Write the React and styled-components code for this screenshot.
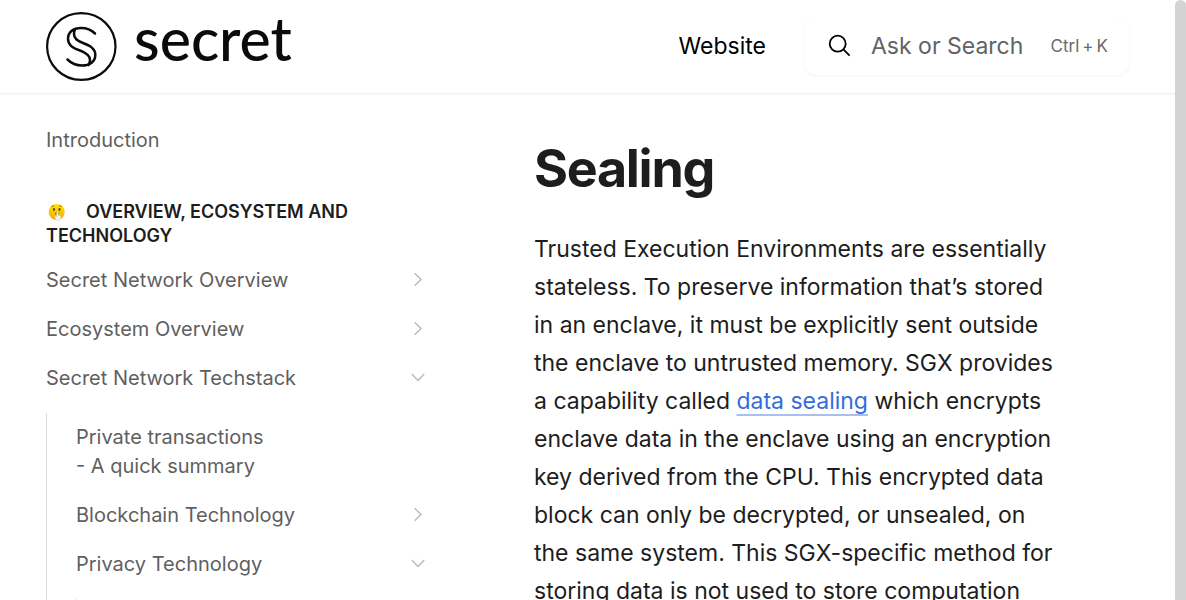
import React from "react";
import styled, { createGlobalStyle } from "styled-components";

const GlobalStyle = createGlobalStyle`
  *, *::before, *::after { box-sizing: border-box; }
  body {
    margin: 0;
    background: #fff;
    color: #1d1d1d;
    font-family: Inter, "Liberation Sans", sans-serif;
  }
  a { color: inherit; text-decoration: none; }
`;

const Window = styled.div`
  display: grid;
  grid-template-columns: minmax(0, 1fr) 11px;
  height: 100vh;
  overflow: hidden;
`;

const ScrollThumb = styled.div`
  background: #d3d3d3;
  border-radius: 6px 6px 0 0;
`;

const Page = styled.div`
  overflow: hidden;
`;

const Header = styled.header`
  display: flex;
  align-items: center;
  height: 94px;
  padding: 0 46px 2px;
  border-bottom: 1px solid #f0f0f0;
  box-shadow: 0 1px 1px #fafafa;
`;

const Brand = styled.a`
  display: flex;
  align-items: center;
  gap: 17px;
  margin-right: auto;
  color: #0b0b0b;
`;

const BrandMark = styled.svg`
  width: 71px;
  height: 72px;
`;

const BrandName = styled.span`
  font: 500 59px/70px Lato, sans-serif;
  padding-bottom: 14px;
`;

const HeaderLink = styled.a`
  margin-right: 38px;
  font-size: 23px;
  line-height: 36px;
  color: #000;
`;

const SearchBox = styled.label`
  display: flex;
  align-items: center;
  width: 325px;
  height: 58px;
  padding: 0 21px 0 24px;
  border-radius: 12px;
  color: #000;
  box-shadow: 0 1px 3px #0000000d, 0 0 1px #00000008;
`;

const SearchInput = styled.input`
  flex: 1;
  min-width: 0;
  margin-left: 20px;
  padding: 0;
  border: 0;
  outline: 0;
  background: none;
  font: 400 23px/36px Inter, sans-serif;
  color: #1d1d1d;
  &::placeholder { color: #636363; opacity: 1; }
`;

const Shortcut = styled.kbd`
  display: flex;
  gap: 3px;
  font: 400 17px/24px Inter, sans-serif;
  color: #6b6b6b;
`;

const Columns = styled.div`
  display: grid;
  grid-template-columns: 394px minmax(0, 524px);
  gap: 94px;
  padding: 22px 46px 0;
`;

const Sidebar = styled.nav`
  font-size: 20px;
  line-height: 29px;
  color: #5f5f5f;
`;

const SectionTitle = styled.h2`
  margin: 35px 0 8px;
  font-size: 18px;
  line-height: 24px;
  font-weight: 600;
  text-transform: uppercase;
  color: #1d1d1d;
`;

const Emoji = styled.svg`
  width: 22px;
  height: 18px;
  margin-right: 18px;
  vertical-align: -3px;
`;

const List = styled.ul`
  list-style: none;
  margin: ${({ $nested }) => ($nested ? "10px 0 0" : "0")};
  padding: ${({ $nested }) => ($nested ? "0 0 0 29px" : "0")};
  border-left: ${({ $nested }) => ($nested ? "1px solid #dedede" : "0")};
`;

const ItemLink = styled.a`
  display: flex;
  align-items: center;
  justify-content: space-between;
  padding: 10px 15px 10px 0;
`;

const ItemLabel = styled.span`
  max-width: ${({ $narrow }) => ($narrow ? "200px" : "none")};
`;

const Chevron = styled.svg`
  flex: none;
  width: 14px;
  height: 15px;
  margin-bottom: 2px;
  transform: rotate(${({ $open }) => ($open ? "90deg" : "0deg")});
`;

const Article = styled.main`
  padding-top: 16px;
`;

const Title = styled.h1`
  margin: 0;
  font-size: 52px;
  line-height: 74px;
  font-weight: 700;
  letter-spacing: -0.025em;
`;

const Paragraph = styled.p`
  margin: 24px 0 0;
  font-size: 23px;
  line-height: 38px;
`;

const TextLink = styled.a`
  color: #346ddb;
  text-decoration: underline 2px #a9c0ef;
  text-underline-offset: 5px;
`;

function Item({ label, state, narrow, children }) {
  return (
    <li>
      <ItemLink href="#">
        <ItemLabel $narrow={narrow}>{label}</ItemLabel>
        {state && (
          <Chevron $open={state === "open"} viewBox="0 0 14 14" aria-hidden="true">
            <path d="M3.6 .8 10 7 3.6 13.2" fill="none" stroke="#b9b9b9" strokeWidth="1.4" />
          </Chevron>
        )}
      </ItemLink>
      {children}
    </li>
  );
}

export default function App() {
  return (
    <Window>
      <GlobalStyle />
      <Page>
        <Header>
          <Brand href="#">
            <BrandMark viewBox="0 -2 71 72" fill="none" stroke="currentColor" aria-hidden="true">
              <ellipse cx="35.3" cy="34.5" rx="34.2" ry="33.4" strokeWidth="2.2" />
              <g strokeWidth="2.5" strokeLinecap="round" strokeLinejoin="round">
                <path d="M49 21.500C45 17.500 40 16 35 16C27 16 22 20.500 22 26.500C22 33 26 35.500 34 38.500C40.500 41 44 43.500 44 48C44 50 43.500 51.500 42.500 53" />
                <path d="M29 17.500C28 19 28 20.500 28 22C28 26.500 31 28.500 37 31C45 34 49.300 37 49.300 43C49.300 49.500 44 53.500 36 53.500C30.500 53.500 25.500 51.500 21.500 47.500" />
              </g>
            </BrandMark>
            <BrandName>secret</BrandName>
          </Brand>
          <HeaderLink href="#">Website</HeaderLink>
          <SearchBox>
            <svg width="23" height="23" viewBox="0 0 23 23" fill="none" stroke="currentColor" strokeWidth="1.8" aria-hidden="true">
              <circle cx="9.700" cy="9.700" r="8" />
              <path d="m15.400 15.400 6.200 6.200" />
            </svg>
            <SearchInput type="search" placeholder="Ask or Search" aria-label="Ask or Search" />
            <Shortcut><span>Ctrl</span><span>+</span><span>K</span></Shortcut>
          </SearchBox>
        </Header>
        <Columns>
          <Sidebar>
            <List>
              <Item label="Introduction" />
            </List>
            <SectionTitle>
              <Emoji viewBox="0 0 22 18" aria-hidden="true">
                <defs>
                  <linearGradient id="face" x1="0" y1="0" x2="0" y2="1">
                    <stop offset="0" stopColor="#ffe600" />
                    <stop offset="1" stopColor="#f5a800" />
                  </linearGradient>
                </defs>
                <circle cx="10.700" cy="9" r="8" fill="url(#face)" />
                <path d="M5.500 3.600 8 2.600M13.200 2.600l2.500 1" stroke="#a86500" strokeWidth="1" />
                <ellipse cx="8" cy="6.500" rx="1" ry="1.400" fill="#4b3a16" />
                <ellipse cx="13.500" cy="6.500" rx="1" ry="1.400" fill="#4b3a16" />
                <ellipse cx="11" cy="10.500" rx="2" ry="1" fill="#6b4310" />
                <path d="M10.600 9.500q.8-1 1.500 0l.3 3q2.200-.5 2.500 1l-.5 3q-2.500 2-4.500.5L8.700 13.500q1-.8 2 .2z" fill="#f4f4f4" stroke="#c9c9c9" strokeWidth=".5" />
              </Emoji>
              Overview, Ecosystem and Technology
            </SectionTitle>
            <List>
              <Item label="Secret Network Overview" state="closed" />
              <Item label="Ecosystem Overview" state="closed" />
              <Item label="Secret Network Techstack" state="open">
                <List $nested>
                  <Item label="Private transactions - A quick summary" narrow />
                  <Item label="Blockchain Technology" state="closed" />
                  <Item label="Privacy Technology" state="open">
                    <List $nested>
                      <Item label="Overview" />
                    </List>
                  </Item>
                </List>
              </Item>
            </List>
          </Sidebar>
          <Article>
            <Title>Sealing</Title>
            <Paragraph>
              Trusted Execution Environments are essentially stateless. To preserve information
              that’s stored in an enclave, it must be explicitly sent outside the enclave to
              untrusted memory. SGX provides a capability called{" "}
              <TextLink href="#">data sealing</TextLink> which encrypts enclave data in the
              enclave using an encryption key derived from the CPU. This encrypted data block can
              only be decrypted, or unsealed, on the same system. This SGX-specific method for
              storing data is not used to store computation
            </Paragraph>
          </Article>
        </Columns>
      </Page>
      <ScrollThumb aria-hidden="true" />
    </Window>
  );
}
